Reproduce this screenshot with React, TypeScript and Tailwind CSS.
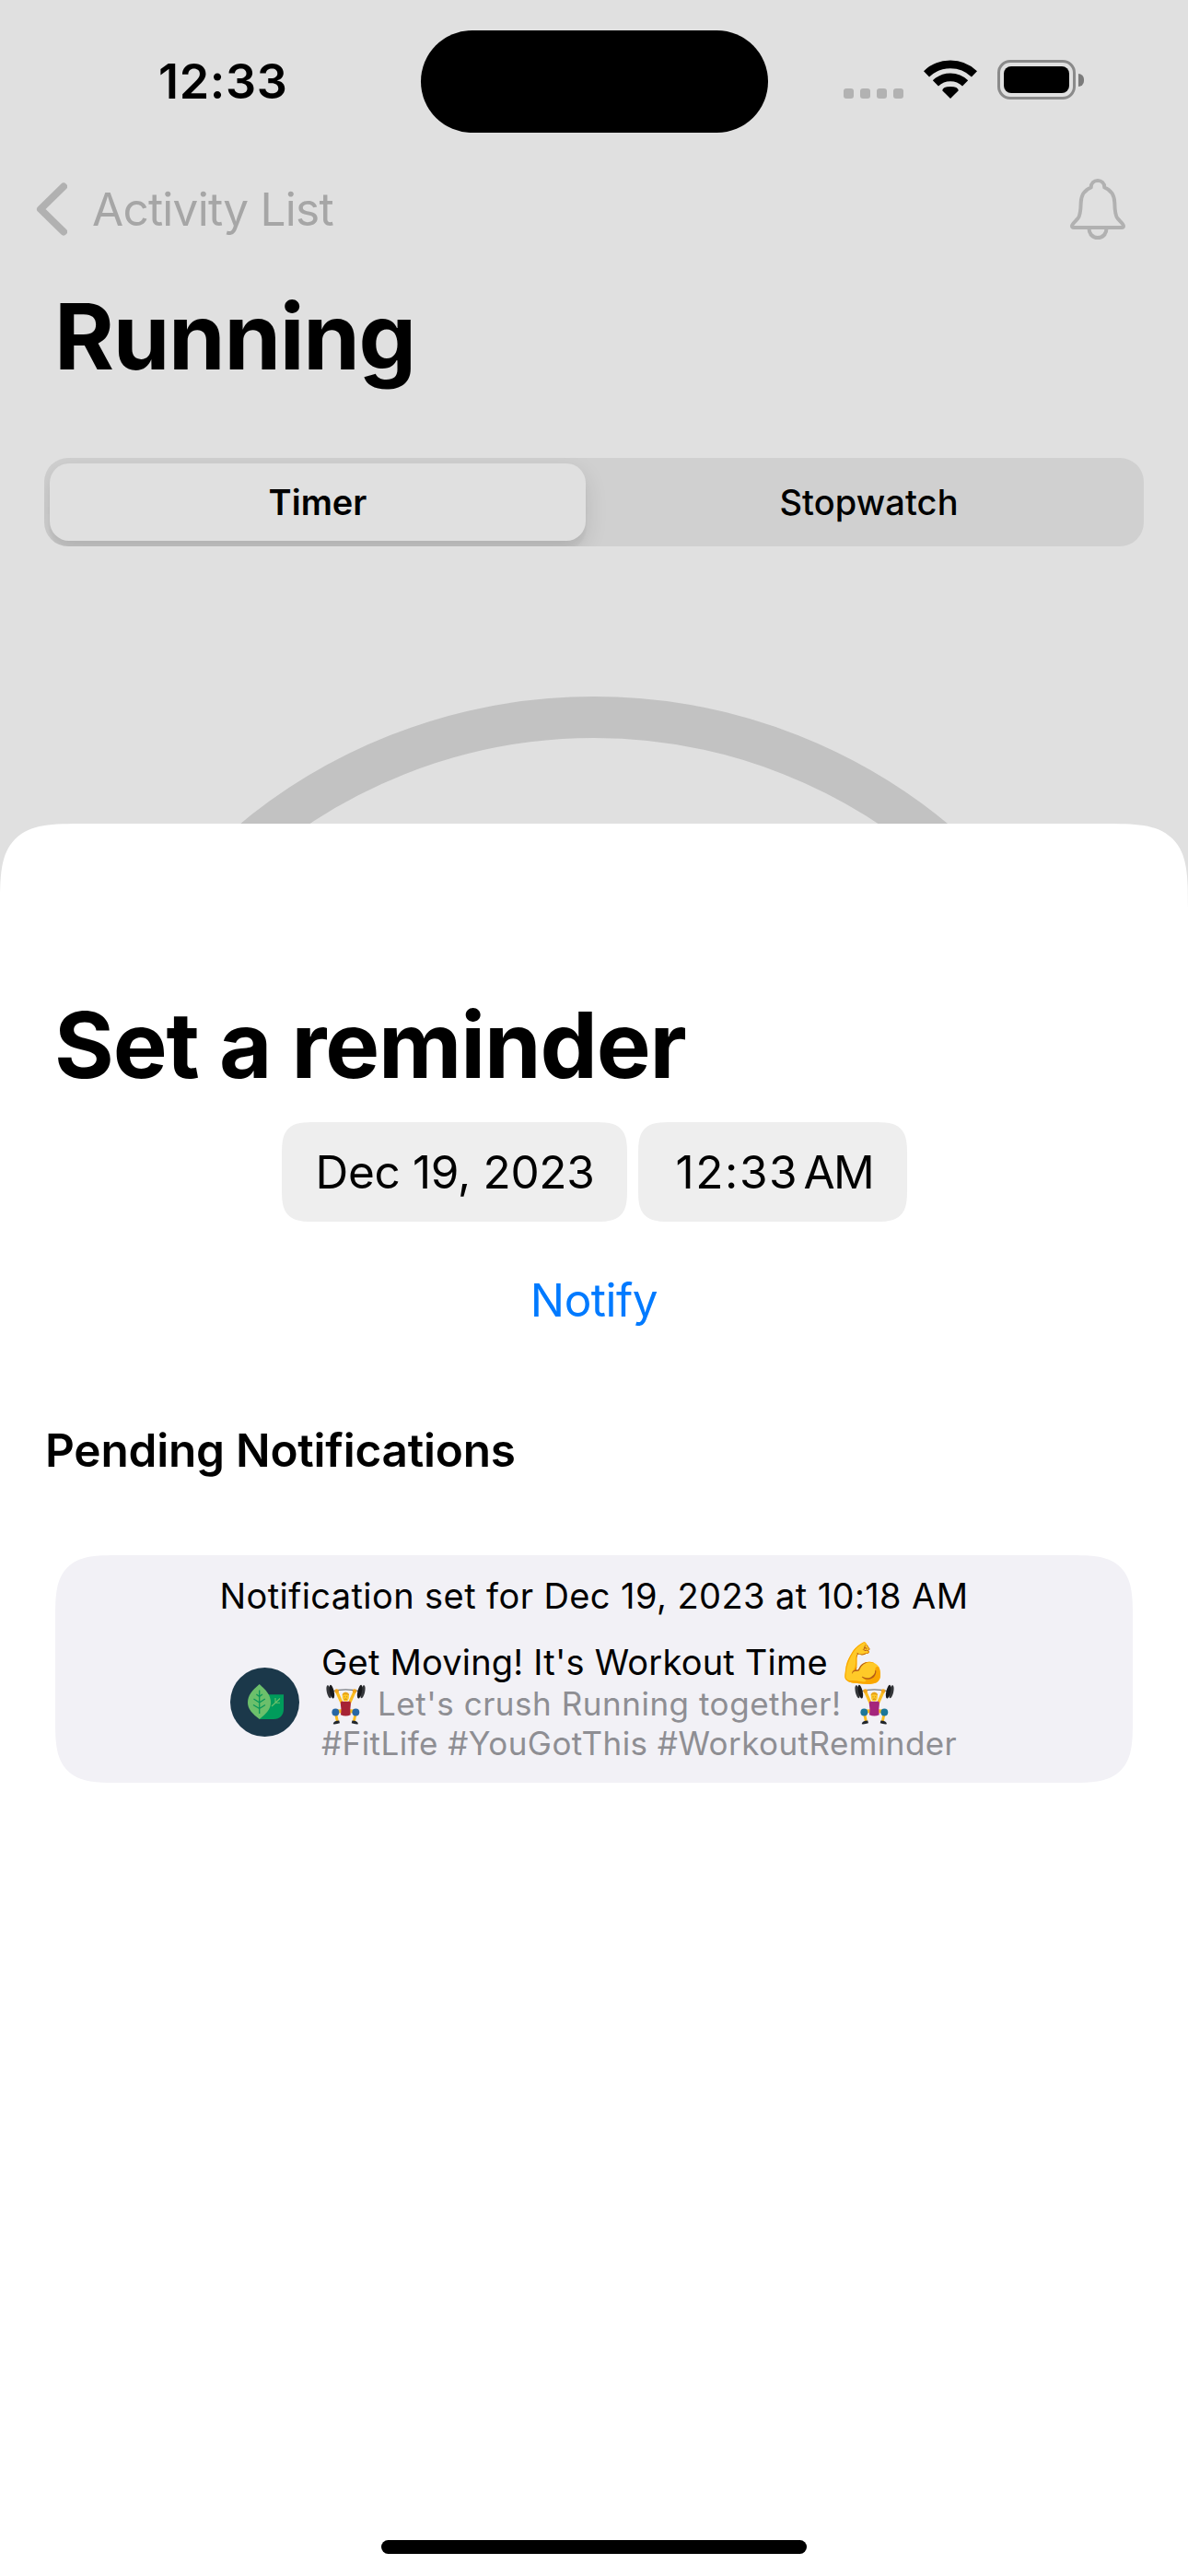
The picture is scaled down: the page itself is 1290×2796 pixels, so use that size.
import React from 'react';

function WifiIcon() {
  return (
    <svg className="h-[42px] w-[58px]" viewBox="0 0 58 42" fill="none">
      <path d="M3 15.4A37.5 37.5 0 0 1 55 15.4" stroke="#000" strokeWidth="8.8" />
      <path d="M12.9 25.4A23 23 0 0 1 45.1 25.4" stroke="#000" strokeWidth="8.8" />
      <path d="M29 42L20.2 33.3Q20.6 29 29 29T37.8 33.3Z" fill="#000" />
    </svg>
  );
}

function StatusBar() {
  return (
    <div className="flex h-[177px] shrink-0 items-start pt-[33px]">
      <div className="w-[457px] pl-[172px] text-[52px] leading-[112px] font-semibold tracking-[0.7px]">12:33</div>
      <div className="h-[111px] w-[377px] rounded-full bg-black" />
      <div className="ml-[82px] flex gap-[7px] pt-[63px]">
        {[0, 1, 2, 3].map((i) => (
          <span key={i} className="size-[11px] rounded-[3px] bg-[#b2b2b2]" />
        ))}
      </div>
      <div className="ml-[22px] pt-[32px]">
        <WifiIcon />
      </div>
      <div className="ml-[22px] flex items-center gap-[3px] pt-[32px]">
        <div className="h-[43px] w-[85px] rounded-[14px] border-[3px] border-[#8a8a8a] p-1">
          <div className="h-[29px] w-[71px] rounded-[8px] bg-black" />
        </div>
        <div className="h-[14px] w-[6px] rounded-r-full bg-[#7b7b7b]" />
      </div>
    </div>
  );
}

function NavBar() {
  return (
    <div className="flex h-[100px] shrink-0 items-center pr-[68px] pl-[39px]">
      <svg className="h-[58px] w-[34px]" viewBox="0 0 34 58" fill="none">
        <path d="M30 4.5L5 29L30 53.5" stroke="#b1b1b1" strokeWidth="8" strokeLinecap="round" strokeLinejoin="round" />
      </svg>
      <span className="ml-[27px] text-[49.5px] tracking-[-0.75px] text-[#a6a6a6]">Activity List</span>
      <svg className="ml-auto h-[66px] w-[60px]" viewBox="0 0 60 66" fill="none" stroke="#b1b1b1" strokeWidth="4" strokeLinejoin="round">
        <path d="M22.7 9.5C22.7 4.8 26 2 30 2S37.3 4.8 37.3 9.5C44 12 48 18 48.3 26C48.5 34 48.8 40 51.5 43C54 46 58 49 58 51.3Q58 53 56 53H4Q2 53 2 51.3C2 49 6 46 8.5 43C11.2 40 11.5 34 11.7 26C12 18 16 12 22.7 9.5Z" />
        <path d="M20.5 54C20.5 60 24.5 64 30 64S39.5 60 39.5 54" />
      </svg>
    </div>
  );
}

function SegmentedControl() {
  return (
    <div className="mx-12 mt-11 flex h-24 shrink-0 overflow-hidden rounded-[26px] bg-[#d0d0d0] p-[6px] text-[38px] font-medium">
      <div className="flex w-[582px] items-center justify-center rounded-[21px] bg-[#e0e0e0] font-semibold shadow-[0_9px_24px_rgba(0,0,0,0.12),0_9px_3px_rgba(0,0,0,0.04)]">
        Timer
      </div>
      <div className="flex flex-1 items-center justify-center pl-[15px] tracking-[0.1px]">Stopwatch</div>
    </div>
  );
}

function LeafLogo() {
  return (
    <svg className="size-[75px]" viewBox="0 0 75 75" fill="none">
      <circle cx="37.5" cy="37.5" r="37.5" fill="#1b384a" />
      <path d="M31.7 56L40 29.3H58V45C58 51.5 54 56 47 56Z" fill="#009b5b" />
      <path d="M31.7 18C39 24.5 44 30 44 38C44 45 39 50 31.7 56C24 50 19 45 19 38C19 30 24 24.5 31.7 18Z" fill="#6cbf6b" />
      <path d="M31.7 24.5V50M31.7 31.5L28.4 29M31.7 31.5L35 29M31.7 38L25.5 34M31.7 38L37.8 34M31.7 44.5L25 40.5M31.7 44.5L38 40.5" stroke="#0a965a" strokeWidth="1.3" />
      <path d="M45 42L54 33.5M49 38V33M49 38.2H54" stroke="#6cbf6b" strokeWidth="1.1" />
    </svg>
  );
}

type LifterProps = { label: string; shirt: string; knees: string };

function Lifter({ label, shirt, knees }: LifterProps) {
  return (
    <svg className="h-[44px] w-[43px]" viewBox="26 23 130 134" fill="none" role="img" aria-label={label}>
      <path d="M46 46Q90 36 136 46" stroke="#777b80" strokeWidth="4" />
      <ellipse cx="35" cy="48" rx="7" ry="22" fill="#34363a" transform="rotate(-12 35 48)" />
      <ellipse cx="45" cy="48" rx="7" ry="23" fill="#18191c" transform="rotate(-12 45 48)" />
      <ellipse cx="147" cy="48" rx="7" ry="22" fill="#34363a" transform="rotate(12 147 48)" />
      <ellipse cx="137" cy="48" rx="7" ry="23" fill="#18191c" transform="rotate(12 137 48)" />
      <path d="M62 50L78 86M119 50L103 86" stroke="#fcbd20" strokeWidth="10" strokeLinecap="round" />
      <circle cx="61" cy="46" r="7" fill="#f0a41c" />
      <circle cx="120" cy="46" r="7" fill="#f0a41c" />
      <path d="M62 113L80 112M119 113L101 112" stroke="#fcbd20" strokeWidth="12" strokeLinecap="round" />
      <path d="M58 122L63 145M123 122L118 145" stroke="#fcbd20" strokeWidth="9" />
      <path d="M75 80H106C110 94 103 100 107 124Q91 132 74 124C79 100 71 94 75 80Z" fill={shirt} />
      <ellipse cx="90.500" cy="65" rx="11" ry="15" fill="#ffc928" />
      <path d="M79 61C78 46 103 46 102 61Q90 53 79 61Z" fill="#e8a41a" />
      <path d="M85 65H88M93 65H96M86 73Q90.500 71 95 73" stroke="#9b5a12" strokeWidth="2" />
      <circle cx="57" cy="116" r="12" fill={knees} />
      <circle cx="124" cy="116" r="12" fill={knees} />
      <path d="M49 155Q50 143 69 143L71 152Q60 156 49 155ZM132 155Q131 143 112 143L110 152Q121 156 132 155Z" fill="#20252b" />
    </svg>
  );
}

function NotificationCard() {
  return (
    <div className="mx-[60px] mt-[84px] h-[247px] rounded-[69px] bg-[#f2f1f6] pt-[20px] [corner-shape:superellipse(1.7)]">
      <div className="text-center text-[38px] leading-[48px] tracking-[0.41px]">
        Notification set for Dec 19, 2023 at 10:18 AM
      </div>
      <div className="mt-[24px] ml-[190px] flex items-center gap-[24px]">
        <LeafLogo />
        <div className="whitespace-nowrap">
          <div className="flex h-[48px] items-center text-[38px] tracking-[0.2px]">
            Get Moving! It&apos;s Workout Time
            <span className="ml-[11px] text-[43px] leading-[48px]">💪</span>
          </div>
          <div className="flex h-[43px] items-center text-[35px] tracking-[0.53px] text-[#8e8e93]">
            <span className="mr-[10px] ml-[5px]">
              <Lifter label="🏋️‍♂️" shirt="#a62334" knees="#2767a5" />
            </span>
            <span className="w-[521px] pl-[3px]">Let&apos;s crush Running together!</span>
            <Lifter label="🏋️‍♀️" shirt="#a4257c" knees="#1d7799" />
          </div>
          <div className="text-[35px] leading-[43px] tracking-[0.44px] text-[#8e8e93]">
            #FitLife #YouGotThis #WorkoutReminder
          </div>
        </div>
      </div>
    </div>
  );
}

function ReminderSheet() {
  return (
    <div className="relative -mt-[100px] flex h-[1902px] flex-col rounded-t-[92px] bg-white pt-[180px] [corner-shape:superellipse(1.8)]">
      <h2 className="pl-[59px] text-[99px] leading-[120px] font-bold tracking-[-1.15px]">Set a reminder</h2>
      <div className="mt-6 flex justify-center gap-3 text-[49.5px]">
        <div className="flex h-[108px] w-[375px] items-center justify-center rounded-[37px] bg-[#eeeeee] pl-[2px] tracking-[-0.32px] [corner-shape:superellipse(1.7)]">
          Dec 19, 2023
        </div>
        <div className="flex h-[108px] w-[292px] items-center rounded-[37px] bg-[#eeeeee] pl-[41px] [corner-shape:superellipse(1.7)]">
          <span className="w-[139px] tracking-[1.6px]">12:33</span>
          <span className="tracking-[-1.6px]">AM</span>
        </div>
      </div>
      <button className="mt-[55px] self-center text-[49.5px] leading-[60px] tracking-[-0.5px] text-[#007aff]">Notify</button>
      <h3 className="mt-[103px] pl-[49px] text-[49.5px] leading-[60px] font-semibold tracking-[-0.21px]">
        Pending Notifications
      </h3>
      <NotificationCard />
      <div className="mt-auto mb-[24px] h-[15px] w-[462px] self-center rounded-full bg-black" />
    </div>
  );
}

export default function App() {
  return (
    <div className="h-[2796px] w-[1290px] overflow-hidden bg-[#e0e0e0] font-['Inter',sans-serif] text-black">
      <div className="flex h-[994px] flex-col overflow-hidden">
        <StatusBar />
        <NavBar />
        <h1 className="shrink-0 pl-[59px] text-[99px] leading-[176px] font-bold tracking-[-1.3px]">Running</h1>
        <SegmentedControl />
        <div className="mt-[163px] size-[1206px] shrink-0 self-center rounded-full border-[45px] border-[#c2c2c2]" />
      </div>
      <ReminderSheet />
    </div>
  );
}
